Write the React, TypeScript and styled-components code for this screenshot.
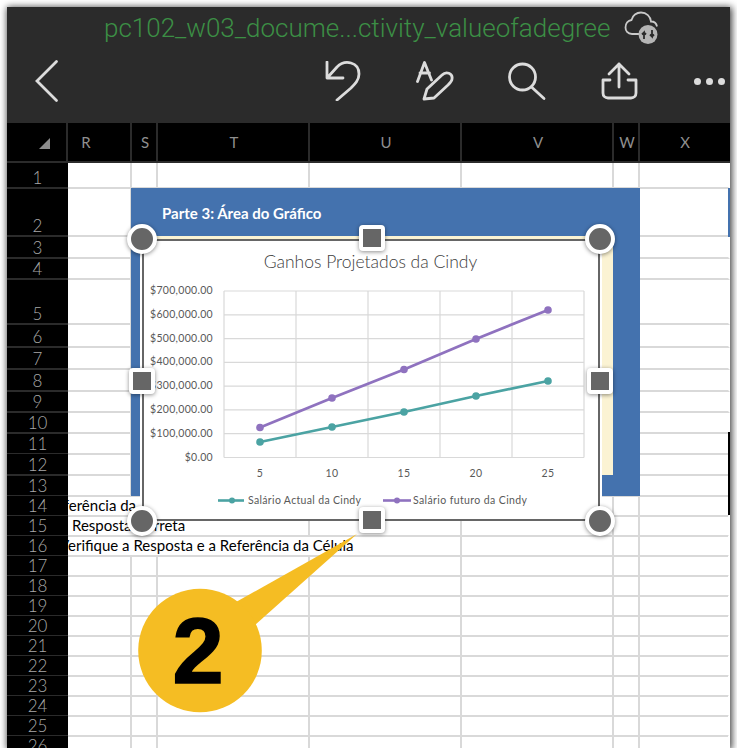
import React from 'react'
import styled, { createGlobalStyle } from 'styled-components'

const COLUMNS = [
  { name: 'R', width: 64, inset: 28 },
  { name: 'S', width: 26, inset: 0 },
  { name: 'T', width: 152, inset: 0 },
  { name: 'U', width: 152, inset: 0 },
  { name: 'V', width: 152, inset: 0 },
  { name: 'W', width: 26, inset: 0 },
  { name: 'X', width: 90, inset: 0 },
]

const GRID_TEMPLATE = `61px ${COLUMNS.map((c) => c.width + 'px').join(' ')}`

type SheetRow = { height: number; text?: string; offset?: number; open?: number }

const ROWS: SheetRow[] = [
  { height: 26 },
  { height: 48 },
  { height: 22 },
  { height: 21 },
  { height: 45 },
  { height: 23 },
  { height: 22 },
  { height: 22 },
  { height: 21 },
  { height: 21 },
  { height: 20 },
  { height: 22 },
  { height: 20 },
  { height: 20, text: 'Referência da Célula', offset: -21, open: 2 },
  { height: 20, text: 'Resposta Correta', offset: 4, open: 2 },
  { height: 20, text: 'Verifique a Resposta e a Referência da Célula', offset: -9, open: 3 },
  { height: 20 },
  { height: 20 },
  { height: 20 },
  { height: 20 },
  { height: 20 },
  { height: 20 },
  { height: 20 },
  { height: 20 },
  { height: 20 },
  { height: 20 },
]

const CATEGORIES = [5, 10, 15, 20, 25]
const AXIS = [700, 600, 500, 400, 300, 200, 100, 0]
const PLOT = { left: 224, right: 584, top: 291, bottom: 457.5 }
const CURRENT = [442, 427, 412, 396, 381]
const FUTURE = [427.5, 398, 369.5, 339, 310]
const pointX = (i: number) => 260 + i * 72

function Series({ values, color }: { values: number[]; color: string }) {
  return (
    <g>
      <polyline
        points={values.map((y, i) => `${pointX(i)},${y}`).join(' ')}
        fill='none'
        stroke={color}
        strokeWidth={2.8}
      />
      {values.map((y, i) => (
        <circle key={i} cx={pointX(i)} cy={y} r={3.8} fill={color} />
      ))}
    </g>
  )
}

function ChartDrawing() {
  const step = (PLOT.bottom - PLOT.top) / 7
  return (
    <ChartSvg viewBox='144 241 454 278'>
      <ChartTitle x={370.5} y={268} textAnchor='middle'>
        Ganhos Projetados da Cindy
      </ChartTitle>
      <g stroke='#d9d9d9' strokeWidth={1.2}>
        {AXIS.map((_, i) => (
          <line key={i} x1={PLOT.left} x2={PLOT.right} y1={PLOT.top + i * step} y2={PLOT.top + i * step} />
        ))}
        {[0, 1, 2, 3, 4, 5].map((i) => (
          <line key={i} x1={PLOT.left + i * 72} x2={PLOT.left + i * 72} y1={PLOT.top} y2={PLOT.bottom} />
        ))}
      </g>
      {AXIS.map((v, i) => (
        <AxisLabel key={v} x={213} y={PLOT.top + i * step + 3} textAnchor='end'>
          {v === 0 ? '$0.00' : `$${v},000.00`}
        </AxisLabel>
      ))}
      {CATEGORIES.map((c, i) => (
        <AxisLabel key={c} x={pointX(i)} y={477} textAnchor='middle'>
          {c}
        </AxisLabel>
      ))}
      <Series values={CURRENT} color='#4ba3a3' />
      <Series values={FUTURE} color='#8f72bf' />
      <line x1={218} x2={244} y1={500.5} y2={500.5} stroke='#4ba3a3' strokeWidth={2.6} />
      <circle cx={232} cy={500.5} r={3} fill='#4ba3a3' />
      <LegendLabel x={248} y={504} textLength={113}>
        Salário Actual da Cindy
      </LegendLabel>
      <line x1={383} x2={411} y1={500.5} y2={500.5} stroke='#8f72bf' strokeWidth={2.6} />
      <circle cx={397} cy={500.5} r={3} fill='#8f72bf' />
      <LegendLabel x={413} y={504} textLength={114}>
        Salário futuro da Cindy
      </LegendLabel>
    </ChartSvg>
  )
}

function App() {
  return (
    <Frame>
      <GlobalStyle />
      <TitleBar>
        <FileName>pc102_w03_docume...ctivity_valueofadegree</FileName>
        <svg width={36} height={36} viewBox='624 9 36 36'>
          <path
            d='M642 33H632C627.5 33 625.5 29.5 625.5 26.5C625.5 22.5 628 19.5 631.5 19C632.5 14.5 636.5 11.5 641 11.5C646.5 11.5 650.5 15.5 651 20.5C654 20.5 656.5 22.5 657 25.5'
            fill='none'
            stroke='#c9c9c9'
            strokeWidth={1.8}
          />
          <circle cx={648} cy={33.5} r={9.5} fill='#b5b5b5' />
          <path
            d='M644 38V31.5L642 33.5M644 31.5L646 33.5M652 29V35.5L650 33.5M652 35.5L654 33.5'
            fill='none'
            stroke='#2b2b2b'
            strokeWidth={1.8}
          />
        </svg>
      </TitleBar>
      <Toolbar>
        <BackIcon viewBox='34 59 26 44'>
          <path d='M56.5 61.5L37 81L56.5 100.5' />
        </BackIcon>
        <ToolIcons>
          <ToolIcon viewBox='323 61 38 40'>
            <path d='M326 62V78H342M327 77L336 67C344 59 358 62 358 74C358 80 354 84 350 88L336 100' />
          </ToolIcon>
          <ToolIcon viewBox='415 61 38 40'>
            <path d='M416.5 81.5L423.5 62.5L430.5 80M419 73H428.5' />
            <path d='M423 99L426 89L441 75C445 71 452 73 451 79C451 81 449 83 447 85L433 98Z' />
          </ToolIcon>
          <ToolIcon viewBox='507 61 38 40'>
            <circle cx={521.5} cy={77} r={13} />
            <path d='M530.5 87L543 98.5' />
          </ToolIcon>
          <ToolIcon viewBox='599 61 38 40'>
            <path d='M618 87V64M608 74L618 64L628 74' />
            <path d='M609 80H602V93C602 96 604 98 607 98H630C633 98 635 96 635 93V80H627' />
          </ToolIcon>
          <MoreDots>
            <i />
            <i />
            <i />
          </MoreDots>
        </ToolIcons>
      </Toolbar>
      <ColumnHeader>
        <Corner>
          <svg width={12} height={11} viewBox='0 0 12 11'>
            <polygon points='0,11 11,11 11,0' fill='#8c8c8c' />
          </svg>
        </Corner>
        {COLUMNS.map((c) => (
          <ColumnName key={c.name} $inset={c.inset}>
            {c.name}
          </ColumnName>
        ))}
      </ColumnHeader>
      <Sheet>
        {ROWS.map((row, r) => (
          <Row key={r} $height={row.height}>
            <RowName>{r + 1}</RowName>
            {COLUMNS.map((c, i) => (
              <Cell key={c.name} $open={i < (row.open ?? 0)}>
                {i === 0 && row.text && <CellText $offset={row.offset ?? 0}>{row.text}</CellText>}
              </Cell>
            ))}
          </Row>
        ))}
        <RightMark $top={25} $height={49} $color='#4472ae' />
        <RightMark $top={269} $height={83} $color='#000' />
        <BluePanel>
          <PanelTitle>Parte 3: Área do Gráfico</PanelTitle>
          <CreamBand />
        </BluePanel>
        <ChartBox>
          <ChartDrawing />
        </ChartBox>
        <Callout viewBox='130 530 240 190'>
          <path d='M236 602L357 534L255 625Z' fill='#f5bd23' />
          <circle cx={200} cy={650.5} r={61.8} fill='#f5bd23' />
          <CalloutNumber x={198} y={683} textAnchor='middle'>
            2
          </CalloutNumber>
        </Callout>
        <RoundHandle $x={142} $y={239} />
        <RoundHandle $x={600} $y={239} />
        <RoundHandle $x={142} $y={521} />
        <RoundHandle $x={600} $y={521} />
        <SquareHandle $x={372} $y={238} />
        <SquareHandle $x={142} $y={381} />
        <SquareHandle $x={600} $y={381} />
        <SquareHandle $x={372} $y={520} />
      </Sheet>
    </Frame>
  )
}

export default App

const GlobalStyle = createGlobalStyle`
  html, body {
    margin: 0;
    background: #fff;
  }
`

const Frame = styled.div`
  width: 723px;
  height: 741px;
  margin: 7px 0 0 7px;
  display: flex;
  flex-direction: column;
  background: #fff;
  box-shadow: 1px 1px 7px 1px rgba(0, 0, 0, 0.75);
  font-family: 'Lato', sans-serif;
`

const TitleBar = styled.div`
  height: 42px;
  padding-left: 97px;
  display: flex;
  align-items: center;
  gap: 13px;
  background: #2b2b2b;
`

const FileName = styled.div`
  font-family: 'Roboto', sans-serif;
  font-weight: 300;
  font-size: 26px;
  color: #3c8f45;
  white-space: nowrap;
`

const Toolbar = styled.div`
  height: 74px;
  padding: 0 4px 10px 27px;
  box-sizing: border-box;
  display: flex;
  align-items: center;
  justify-content: space-between;
  background: #2b2b2b;
`

const BackIcon = styled.svg`
  width: 26px;
  height: 44px;
  fill: none;
  stroke: #dcdcdc;
  stroke-width: 2.8;
  stroke-linecap: round;
`

const ToolIcons = styled.div`
  display: flex;
  align-items: center;
  gap: 54px;
`

const ToolIcon = styled.svg`
  width: 38px;
  height: 40px;
  fill: none;
  stroke: #dcdcdc;
  stroke-width: 2.8;
  stroke-linecap: round;
  stroke-linejoin: round;
`

const MoreDots = styled.div`
  width: 34px;
  display: flex;
  justify-content: center;
  gap: 5px;
  i {
    width: 7px;
    height: 7px;
    border-radius: 50%;
    background: #dcdcdc;
  }
`

const ColumnHeader = styled.div`
  height: 40px;
  display: grid;
  grid-template-columns: ${GRID_TEMPLATE};
  background: #000;
`

const Corner = styled.div`
  box-sizing: border-box;
  border-bottom: 2px solid #2b2b2b;
  padding: 15px 17px 0 0;
  display: flex;
  justify-content: flex-end;
  align-items: flex-start;
`

const ColumnName = styled.div<{ $inset: number }>`
  box-sizing: border-box;
  border-left: 2px solid #2b2b2b;
  border-bottom: 2px solid #2b2b2b;
  margin-left: -2px;
  padding-right: ${(p) => p.$inset}px;
  display: flex;
  align-items: center;
  justify-content: center;
  font-size: 15px;
  color: #8f8f8f;
`

const Sheet = styled.div`
  flex: 1;
  min-height: 0;
  position: relative;
  overflow: hidden;
`

const Row = styled.div<{ $height: number }>`
  height: ${(p) => p.$height}px;
  display: grid;
  grid-template-columns: ${GRID_TEMPLATE};
`

const RowName = styled.div`
  position: relative;
  z-index: 1;
  box-sizing: border-box;
  background: #000;
  border-bottom: 2px solid #2b2b2b;
  display: flex;
  align-items: flex-end;
  justify-content: center;
  font-size: 17px;
  line-height: 19px;
  font-weight: 300;
  color: #a8a8a8;
`

const Cell = styled.div<{ $open: boolean }>`
  box-sizing: border-box;
  min-width: 0;
  border-bottom: 2px solid #d9d9d9;
  border-right: ${(p) => (p.$open ? 'none' : '2px solid #d9d9d9')};
  &:last-child {
    border-right: 2px solid #fff;
  }
`

const CellText = styled.div<{ $offset: number }>`
  margin-left: ${(p) => p.$offset}px;
  font-size: 15px;
  line-height: 19px;
  color: #000;
  white-space: nowrap;
`

const RightMark = styled.div<{ $top: number; $height: number; $color: string }>`
  position: absolute;
  right: 0;
  top: ${(p) => p.$top}px;
  width: 2px;
  height: ${(p) => p.$height}px;
  background: ${(p) => p.$color};
`

const BluePanel = styled.div`
  position: absolute;
  left: 124px;
  top: 25px;
  width: 509px;
  height: 308px;
  background: #4472ae;
`

const PanelTitle = styled.div`
  padding: 16px 0 0 31px;
  font-size: 15px;
  font-weight: 700;
  line-height: 18px;
  color: #fff;
`

const CreamBand = styled.div`
  position: absolute;
  left: 10px;
  top: 48px;
  width: 472px;
  height: 239px;
  background: #fbf3d3;
`

const ChartBox = styled.div`
  position: absolute;
  left: 135px;
  top: 76px;
  width: 458px;
  height: 282px;
  box-sizing: border-box;
  border: 2px solid #666;
  background: #fff;
  box-shadow: -2px 0 0 #fff, 2px 0 0 #fff;
`

const ChartSvg = styled.svg`
  display: block;
  width: 454px;
  height: 278px;
`

const ChartTitle = styled.text`
  font-family: 'Lato', sans-serif;
  font-size: 17.5px;
  font-weight: 300;
  fill: #404040;
`

const AxisLabel = styled.text`
  font-family: 'Lato', sans-serif;
  font-size: 10.5px;
  letter-spacing: 0.3px;
  fill: #595959;
`

const LegendLabel = styled.text`
  font-family: 'Lato', sans-serif;
  font-size: 10.5px;
  fill: #595959;
`

const Callout = styled.svg`
  position: absolute;
  left: 123px;
  top: 367px;
  width: 240px;
  height: 190px;
`

const CalloutNumber = styled.text`
  font-family: 'Liberation Sans', sans-serif;
  font-size: 92px;
  font-weight: 700;
  fill: #000;
  stroke: #000;
  stroke-width: 1.5px;
`

const RoundHandle = styled.div<{ $x: number; $y: number }>`
  position: absolute;
  left: ${(p) => p.$x - 7 - 15}px;
  top: ${(p) => p.$y - 163 - 15}px;
  width: 22px;
  height: 22px;
  border: 4px solid #fff;
  border-radius: 50%;
  background: #666;
  box-shadow: 0 1px 4px rgba(0, 0, 0, 0.45);
`

const SquareHandle = styled.div<{ $x: number; $y: number }>`
  position: absolute;
  left: ${(p) => p.$x - 7 - 13}px;
  top: ${(p) => p.$y - 163 - 13}px;
  width: 18px;
  height: 18px;
  border: 4px solid #fff;
  border-radius: 4px;
  background: #666;
  background-clip: padding-box;
  box-shadow: 0 1px 4px rgba(0, 0, 0, 0.45);
`
